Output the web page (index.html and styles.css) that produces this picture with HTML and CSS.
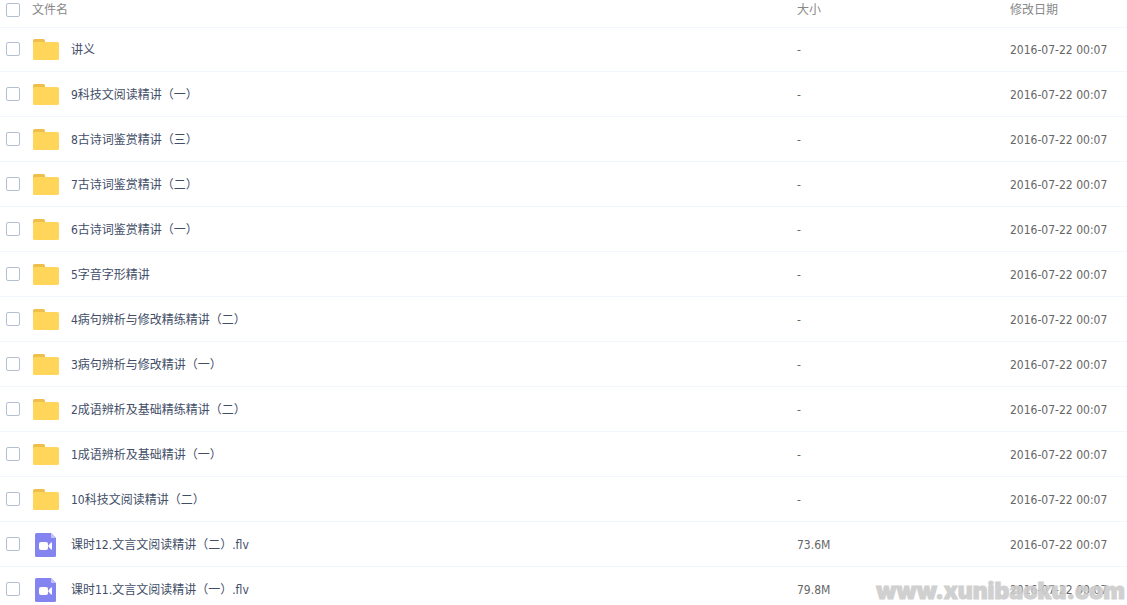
FILE: index.html
```html
<!DOCTYPE html>
<html lang="zh-CN">
<head>
    <meta charset="UTF-8">
    <meta name="viewport" content="width=device-width, initial-scale=1.0">
    <title>文件列表</title>
    <link rel="stylesheet" href="styles.css">
</head>
<body>
    <svg class="sprite" aria-hidden="true">
        <symbol id="icon-folder" viewBox="0 0 28 24">
            <path fill="#eec04b" d="M1 6V2.500Q1 1 2.500 1H11.500Q13 1 13 2.500V6z"/>
            <rect x="1" y="4" width="26" height="18" rx="1.500" fill="#ffd65a"/>
        </symbol>
        <symbol id="icon-video" viewBox="0 0 28 24">
            <path fill="#8384f0" d="M4.500 0H19L24 5V22.500Q24 24 22.500 24H4.500Q3 24 3 22.500V1.500Q3 0 4.500 0z"/>
            <path fill="#c3c4fb" d="M19 0L24 5H20Q19 5 19 4z"/>
            <rect x="7" y="9" width="9" height="8" rx="2" fill="#fff"/>
            <path fill="#fff" d="M16 13L19 9.500Q20 9 20 10V16Q20 17 19 16.500z"/>
        </symbol>
    </svg>

    <div class="file-list">
        <table class="file-table">
            <thead>
                <tr>
                    <th class="col-check"><input type="checkbox" class="check" aria-label="全选"></th>
                    <th class="col-name">文件名</th>
                    <th class="col-size">大小</th>
                    <th class="col-date">修改日期</th>
                </tr>
            </thead>
            <tbody id="files"></tbody>
        </table>
        <div class="watermark">www.xunibaoku.com</div>
    </div>

    <script src="files.js"></script>
</body>
</html>
```
FILE: styles.css
```css
body {
    margin: 0;
    background-color: #fff;
    font-family: "DejaVu Sans Condensed", "Noto Sans CJK SC", sans-serif;
    font-size: 12px;
    line-height: 14px;
    color: #666;
}
.sprite {
    display: none;
}
.file-list {
    position: relative;
    height: 100vh;
    overflow: hidden;
}
.file-table {
    width: 100%;
    table-layout: fixed;
    border-collapse: separate;
    border-spacing: 0;
}
.file-table th,
.file-table td {
    padding: 0;
    text-align: left;
    border-bottom: 1px solid #f2f6fd;
}
.file-table th {
    height: 18px;
    padding: 1px 0 8px;
    font-weight: normal;
    color: #888;
}
.file-table td {
    height: 42px;
    padding-top: 2px;
}
.file-table td:first-child {
    padding: 1px 0;
}
.file-table tbody tr:first-child td {
    padding-top: 1px;
}
.file-table tbody tr:first-child td:first-child {
    padding: 0 0 1px;
}
.file-table .col-check {
    width: 32px;
}
.file-table .col-size {
    width: 213px;
}
.file-table .col-date {
    width: 117px;
}
.check {
    appearance: none;
    display: block;
    box-sizing: border-box;
    width: 14px;
    height: 14px;
    margin: 0 0 0 6px;
    border: 1px solid #b4c0d2;
    border-radius: 2px;
    background-color: #fff;
}
.check:checked {
    background-color: #3b8cff;
    border-color: #3b8cff;
}
.file-name {
    display: flex;
    align-items: center;
    gap: 11px;
    color: #424e67;
    text-decoration: none;
}
.file-name:hover {
    color: #09aaff;
}
.icon {
    flex: none;
    width: 28px;
    height: 24px;
}
.watermark {
    position: absolute;
    right: 2px;
    bottom: 4px;
    font-family: Inter, sans-serif;
    font-size: 23px;
    font-weight: 900;
    line-height: 20px;
    color: #ccc;
    -webkit-text-stroke: 1px #ccc;
    opacity: 0.9;
    pointer-events: none;
}
```
FILE: files.js
```js
const files = [
    { name: '讲义' },
    { name: '9科技文阅读精讲（一）' },
    { name: '8古诗词鉴赏精讲（三）' },
    { name: '7古诗词鉴赏精讲（二）' },
    { name: '6古诗词鉴赏精讲（一）' },
    { name: '5字音字形精讲' },
    { name: '4病句辨析与修改精练精讲（二）' },
    { name: '3病句辨析与修改精讲（一）' },
    { name: '2成语辨析及基础精练精讲（二）' },
    { name: '1成语辨析及基础精讲（一）' },
    { name: '10科技文阅读精讲（二）' },
    { name: '课时12.文言文阅读精讲（二）.flv', size: '73.6M' },
    { name: '课时11.文言文阅读精讲（一）.flv', size: '79.8M' }
];

document.getElementById('files').innerHTML = files.map((file, i) => `
    <tr>
        <td><input type="checkbox" class="check" aria-labelledby="file-${i}"></td>
        <td>
            <a class="file-name" id="file-${i}" href="#">
                <svg class="icon" aria-hidden="true"><use href="#${file.size ? 'icon-video' : 'icon-folder'}"/></svg>
                <span>${file.name}</span>
            </a>
        </td>
        <td>${file.size || '-'}</td>
        <td>2016-07-22 00:07</td>
    </tr>
`).join('');
```
